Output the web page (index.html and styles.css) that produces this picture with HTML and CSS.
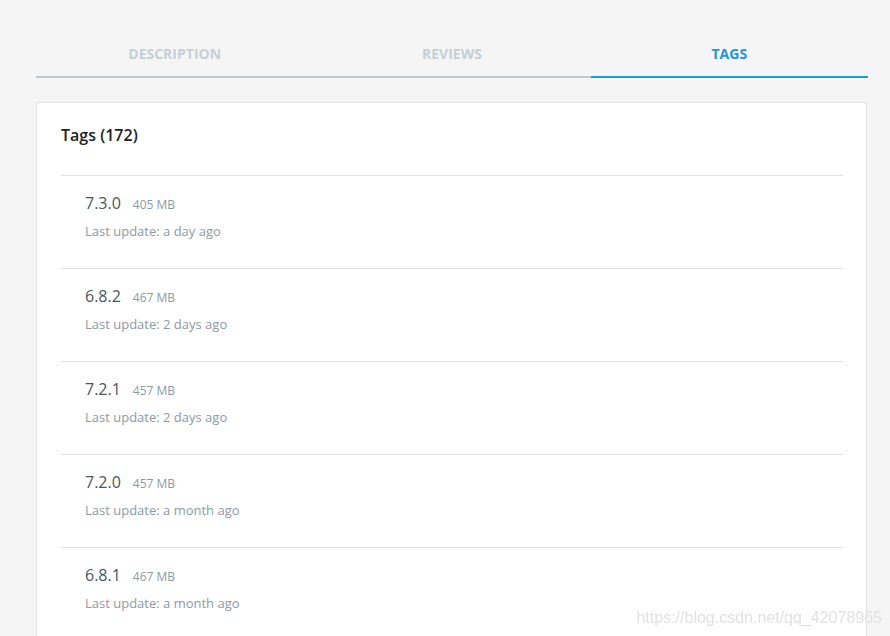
FILE: index.html
```html
<!DOCTYPE html>
<html>
<head>
<meta charset="utf-8">
<link rel="stylesheet" href="styles.css">
</head>
<body>
<div class="page">
  <div class="tabs">
    <div class="tab">DESCRIPTION</div>
    <div class="tab">REVIEWS</div>
    <div class="tab active">TAGS</div>
  </div>
  <div class="card">
    <div class="title">Tags (172)</div>
    <div class="list">
      <div class="row"><div class="name">7.3.0<span class="size">405 MB</span></div><div class="upd">Last update: a day ago</div></div>
      <div class="row"><div class="name">6.8.2<span class="size">467 MB</span></div><div class="upd">Last update: 2 days ago</div></div>
      <div class="row"><div class="name">7.2.1<span class="size">457 MB</span></div><div class="upd">Last update: 2 days ago</div></div>
      <div class="row"><div class="name">7.2.0<span class="size">457 MB</span></div><div class="upd">Last update: a month ago</div></div>
      <div class="row"><div class="name">6.8.1<span class="size">467 MB</span></div><div class="upd">Last update: a month ago</div></div>
    </div>
  </div>
</div>
<div class="watermark">https://blog.csdn.net/qq_42078965</div>
</body>
</html>
```
FILE: styles.css
```css
html, body { margin: 0; padding: 0; height: 100%; overflow: hidden; }
body { background: #f5f5f5; font-family: "Open Sans", "Noto Sans", sans-serif; }
.page { padding: 32px 22px 0 36px; width: 832px; }
.tabs { display: flex; }
.tab {
  flex: 1; text-align: center; font-size: 14px; font-weight: 700; line-height: 20px;
  color: #c7cfd5; padding: 12px 0 12px; border-bottom: 2px solid #c0c9cd;
}
.tab.active { color: #1a96e2; border-bottom-color: #1a9be6; }
.card { margin-top: 24px; background: #fff; border: 1px solid #e3e3e3; padding: 21px 23px 0 24px; width: 782px; }
.title { font-size: 16px; font-weight: 600; line-height: 22px; color: #222; margin-bottom: 29px; }
.row { border-top: 1px solid #e2e2e2; padding: 16px 24px 28px; }
.name { font-size: 16px; line-height: 22px; height: 22px; color: #4a5562; }
.size { font-size: 12px; line-height: 1; color: #8c9aa6; margin-left: 12px; }
.upd { margin-top: 8px; font-size: 13px; line-height: 18px; color: #8c9aa6; }
.watermark {
  position: fixed; right: 8px; bottom: 8px; font-family: "Liberation Sans", Arial, sans-serif;
  font-size: 16px; color: #e2e2e2; line-height: 20px;
}
```
